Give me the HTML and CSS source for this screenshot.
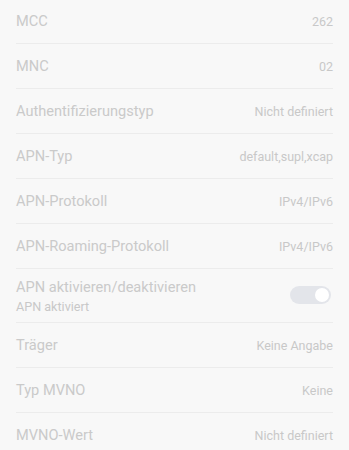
FILE: index.html
```html
<!DOCTYPE html>
<html lang="de">

<head>
    <meta charset="UTF-8">
    <meta name="viewport" content="width=device-width, initial-scale=1.0">
    <title>APN bearbeiten</title>
    <link rel="stylesheet" href="styles.css">
</head>

<body>
    <div class="settings-list">
        <div class="row">
            <span class="title">MCC</span>
            <span class="value">262</span>
        </div>
        <div class="row">
            <span class="title">MNC</span>
            <span class="value">02</span>
        </div>
        <div class="row">
            <span class="title">Authentifizierungstyp</span>
            <span class="value">Nicht definiert</span>
        </div>
        <div class="row">
            <span class="title">APN-Typ</span>
            <span class="value">default,supl,xcap</span>
        </div>
        <div class="row">
            <span class="title">APN-Protokoll</span>
            <span class="value">IPv4/IPv6</span>
        </div>
        <div class="row">
            <span class="title">APN-Roaming-Protokoll</span>
            <span class="value">IPv4/IPv6</span>
        </div>
        <div class="row row-toggle">
            <div class="text-block">
                <span class="title">APN aktivieren/deaktivieren</span>
                <span class="subtitle">APN aktiviert</span>
            </div>
            <div class="switch"><div class="knob"></div></div>
        </div>
        <div class="row">
            <span class="title">Träger</span>
            <span class="value">Keine Angabe</span>
        </div>
        <div class="row">
            <span class="title">Typ MVNO</span>
            <span class="value">Keine</span>
        </div>
        <div class="row">
            <span class="title">MVNO-Wert</span>
            <span class="value">Nicht definiert</span>
        </div>
    </div>
</body>

</html>
```

FILE: styles.css
```css
body {
    font-family: Roboto, "Noto Sans", sans-serif;
    margin: 0;
    background-color: #f8f8f8;
    overflow: hidden;
}

.settings-list {
    margin-top: -1px;
    padding: 0 16px;
}

.row {
    display: flex;
    justify-content: space-between;
    align-items: center;
    height: 44px;
    border-bottom: 1px solid #ececec;
}

.row-toggle {
    height: 53px;
}

.title {
    font-size: 14.6px;
    color: #cacaca;
}

.value {
    font-size: 12.5px;
    color: #c8c8c8;
}

.text-block {
    display: flex;
    flex-direction: column;
    margin-top: 1px;
}

.subtitle {
    font-size: 12.6px;
    color: #c8c8c8;
    margin-top: 3px;
}

.switch {
    width: 41px;
    height: 18px;
    border-radius: 9px;
    background-color: #e3e5ea;
    display: flex;
    align-items: center;
    justify-content: flex-end;
    margin-right: 2px;
    margin-bottom: 2px;
}

.knob {
    width: 14px;
    height: 14px;
    border-radius: 50%;
    background-color: #fff;
    margin-right: 2px;
}
```
